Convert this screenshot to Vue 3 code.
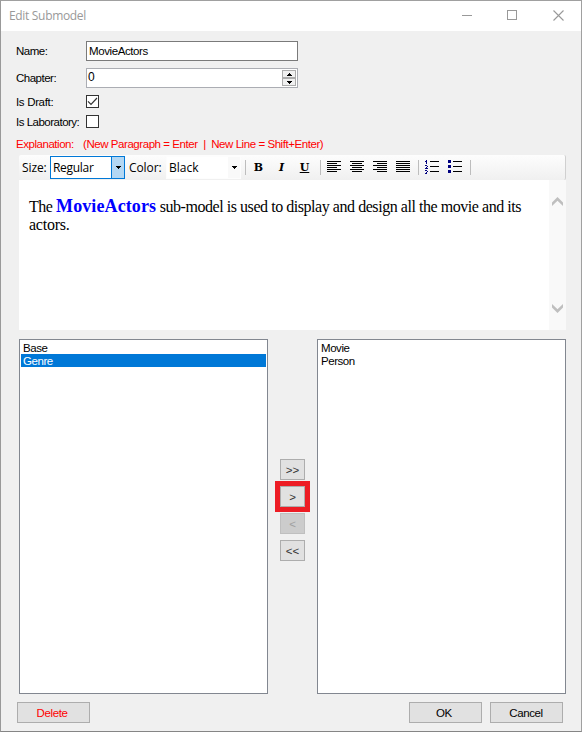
<script setup>
import { ref } from 'vue'
const name = ref('MovieActors')
const chapter = ref('0')
const available = ['Base', 'Genre']
const chosen = ['Movie', 'Person']
const selected = ref('Genre')
const aligns = [
  [[0, 14], [0, 10], [0, 14], [0, 10], [0, 14], [0, 10]],
  [[0, 14], [2, 10], [0, 14], [2, 10], [0, 14], [2, 10]],
  [[0, 14], [4, 10], [0, 14], [4, 10], [0, 14], [4, 10]],
  [[0, 14], [0, 14], [0, 14], [0, 14], [0, 14], [0, 14]],
]
</script>

<template>
  <div class="window">
    <header class="titlebar">
      <span class="title">Edit Submodel</span>
      <svg class="caption" width="110" height="14" viewBox="0 0 110 14" shape-rendering="crispEdges">
        <path d="M1 7.500h10M46.500 2.500h9v9h-9z" fill="none" stroke="#999" />
        <path d="M92.500 2.500l10 10M102.500 2.500l-10 10" fill="none" stroke="#999" stroke-width="1.1" shape-rendering="auto" />
      </svg>
    </header>

    <main class="body">
      <div class="field name-row">
        <label class="t-name">Name:</label>
        <div class="input"><span class="t-value">{{ name }}</span></div>
      </div>
      <div class="field chapter-row">
        <label class="t-chapter">Chapter:</label>
        <div class="input spinner">
          <span class="num">{{ chapter }}</span>
          <div class="spin">
            <i><svg width="5" height="3" shape-rendering="crispEdges"><path d="M2 0h1v1h1v1h1v1h-5v-1h1v-1h1z" /></svg></i>
            <i><svg width="5" height="3" shape-rendering="crispEdges"><path d="M0 0h5v1h-1v1h-1v1h-1v-1h-1v-1h-1z" /></svg></i>
          </div>
        </div>
      </div>
      <div class="field draft-row">
        <label class="t-draft">Is Draft:</label>
        <span class="check"><svg width="11" height="11"><path d="M1 5.300l3 3l6-6.300" fill="none" stroke="#333" stroke-width="1.2" /></svg></span>
      </div>
      <div class="field lab-row">
        <label class="t-lab">Is Laboratory:</label>
        <span class="check"></span>
      </div>
      <div class="explain"><span class="t-exp">Explanation:</span><span class="t-hint">(New Paragraph = Enter&nbsp; |&nbsp; New Line = Shift+Enter)</span></div>

      <div class="toolbar">
        <span class="tb-label">Size:</span>
        <div class="combo active"><span>Regular</span><i><svg width="5" height="3" shape-rendering="crispEdges"><path d="M0 0h5v1h-1v1h-1v1h-1v-1h-1v-1h-1z" /></svg></i></div>
        <span class="tb-label color-label">Color:</span>
        <div class="combo"><span>Black</span><i><svg width="5" height="3" shape-rendering="crispEdges"><path d="M0 0h5v1h-1v1h-1v1h-1v-1h-1v-1h-1z" /></svg></i></div>
        <span class="sep s1"></span>
        <span class="fmt b">B</span><span class="fmt it">I</span><span class="fmt u">U</span>
        <span class="sep s2"></span>
        <svg v-for="(a, i) in aligns" :key="i" class="align" width="14" height="13" shape-rendering="crispEdges">
          <rect v-for="(l, j) in a" :key="j" :x="l[0]" :y="j * 2" :width="l[1]" height="1" />
        </svg>
        <span class="sep s3"></span>
        <svg class="list-icon" width="14" height="15" shape-rendering="crispEdges">
          <path d="M5 1h9v1h-9zM5 6h9v1h-9zM5 11h9v1h-9z" />
          <path fill="#000080" d="M1 0h1v4h-1zM0 1h1v1h-1zM0 5h2v1h-2zM2 6h1v1h-1zM1 7h1v1h-1zM0 8h3v1h-3zM0 10h2v1h-2zM2 11h1v1h-1zM1 12h1v1h-1zM0 13h2v1h-2z" />
        </svg>
        <svg class="list-icon bullets" width="14" height="15" shape-rendering="crispEdges">
          <path d="M5 1h9v1h-9zM5 6h9v1h-9zM5 11h9v1h-9z" />
          <path fill="#000080" d="M0 0h3v3h-3zM0 5h3v3h-3zM0 10h3v3h-3z" />
        </svg>
        <span class="sep s4"></span>
      </div>

      <div class="editor">
        <div class="content"><p><span>The </span><b>MovieActors</b><span> sub-model is used to display and design all the movie and its</span></p><p class="second">actors.</p></div>
        <div class="scroll">
          <svg width="11" height="10"><path d="M0 9v-3.500l5.500-5.500l5.500 5.500v3.500l-5.500-5.200z" fill="#bfbfbf" /></svg>
          <svg width="11" height="10"><path d="M0 0v3.500l5.500 5.500l5.500-5.500v-3.500l-5.500 5.200z" fill="#bfbfbf" /></svg>
        </div>
      </div>

      <div class="lists">
        <ul class="listbox"><li v-for="x in available" :key="x" :class="{ selected: x === selected }">{{ x }}</li></ul>
        <div class="movers">
          <button>&gt;&gt;</button>
          <button class="marked">&gt;</button>
          <button disabled>&lt;</button>
          <button>&lt;&lt;</button>
        </div>
        <ul class="listbox"><li v-for="x in chosen" :key="x">{{ x }}</li></ul>
      </div>

      <footer class="footer">
        <button class="delete">Delete</button>
        <button class="ok">OK</button>
        <button class="cancel">Cancel</button>
      </footer>
    </main>
  </div>
</template>

<style>
body { margin: 0; background: #f0f0f0; }
</style>

<style scoped>
* { box-sizing: border-box; }
.window { width: 582px; height: 732px; border: 1px solid #999; border-color: #a0a0a0 #a0a0a0 #858585 #999; background: #f0f0f0; font: 11.5px/13px "Liberation Sans", Arial, sans-serif; letter-spacing: -0.4px; color: #000; white-space: nowrap; overflow: hidden; }
.titlebar { height: 30px; background: #fff; display: flex; align-items: center; justify-content: space-between; padding: 0 10px 0 8px; }
.title { font: 12px/16px "Open Sans", sans-serif; color: #999; letter-spacing: -0.32px; }
.caption { margin: 0 0 2px; }
.body { padding: 10px 15px 0 15px; display: flex; flex-direction: column; }
.field { display: flex; align-items: center; }
.field label { width: 70px; }
.t-name { letter-spacing: -0.5px; }
.t-chapter { letter-spacing: -0.5px; }
.field .t-draft { letter-spacing: -0.33px; padding-top: 1px; }
.field .t-lab { letter-spacing: -0.5px; padding-top: 1px; }
.name-row { height: 20px; }
.chapter-row { height: 20px; margin-top: 7px; }
.draft-row { height: 13px; margin-top: 7px; }
.lab-row { height: 13px; margin-top: 7px; }
.input { width: 212px; height: 20px; border: 1px solid #7a7a7a; background: #fff; padding: 3px 2px; }
.spinner { border-color: #abadb3; display: flex; justify-content: space-between; padding: 0 1px; }
.num { font-size: 12px; line-height: 17px; }
.spin { width: 14px; height: 18px; display: flex; flex-direction: column; padding: 1px 0; }
.spin i { height: 8px; border: 1px solid #acacac; background: #f0f0f0; display: flex; align-items: center; justify-content: center; }
.check { width: 13px; height: 13px; border: 1px solid #333; background: #fff; display: flex; }
.explain { color: #f00; margin-top: 10px; height: 13px; display: flex; }
.t-exp { width: 67px; letter-spacing: -0.46px; }
.t-hint { letter-spacing: -0.44px; }
.toolbar { margin: 4px 0 0 3px; width: 547px; height: 25px; background: linear-gradient(#fdfdfd, #f0f0f0); border-radius: 2px; border-right: 1px solid #d0d0d0; display: flex; align-items: center; font: 12px/16px "Open Sans", sans-serif; letter-spacing: 0; }
.tb-label { width: 31px; padding-left: 3px; letter-spacing: -0.1px; }
.combo { width: 75px; height: 23px; border: 1px solid #fdfdfd; background: #fff; display: flex; justify-content: space-between; align-items: center; padding-left: 2px; }
.combo i { width: 12px; height: 21px; display: flex; align-items: center; justify-content: center; background: #f9f9f9; }
.active { border-color: #0078d7; letter-spacing: -0.3px; }
.active i { background: #b3d7f3; border-left: 1px solid #0078d7; width: 13px; }
.color-label { width: 41px; padding-left: 4px; }
.sep { width: 1px; height: 15px; background: #bdbdbd; }
.s1 { margin-left: 4px; }
.fmt { font: bold 11px/15px "DejaVu Serif", serif; width: 23px; text-align: center; }
.b { margin-left: 1px; }
.it { font-style: italic; }
.u { text-decoration: underline; }
.s2 { margin-left: 4px; }
.align { margin-left: 9px; }
.s2 + .align { margin-left: 6px; }
.s3 { margin-left: 8px; }
.list-icon { margin-left: 6px; }
.bullets { margin-left: 9px; }
.s4 { margin-left: 8px; }
.editor { margin-left: 3px; width: 547px; height: 150px; background: #fff; display: flex; justify-content: space-between; }
.content { padding: 16px 0 0 10px; font: 16px/20px "Liberation Serif", "Times New Roman", serif; letter-spacing: -0.45px; }
.content p { margin: 0; height: 19px; }
.content b { font-size: 18px; color: #00f; letter-spacing: 0.1px; }
.content .second { letter-spacing: -0.25px; }
.scroll { width: 17px; flex-shrink: 0; background: #f9f9f9; display: flex; flex-direction: column; justify-content: space-between; align-items: center; padding: 17px 0 16px; }
.lists { margin: 9px 0 0 3px; width: 547px; height: 355px; display: flex; justify-content: space-between; }
.listbox { list-style: none; margin: 0; padding: 1px; width: 249px; border: 1px solid #828790; background: #fff; }
.listbox li { height: 13px; padding: 1px 0 0 2px; letter-spacing: -0.45px; }
.selected { background: #0078d7; color: #fff; }
.movers { width: 25px; padding-top: 120px; display: flex; flex-direction: column; gap: 6px; }
button { font: inherit; letter-spacing: -0.4px; height: 21px; padding: 1px 0 0; background: #e1e1e1; border: 1px solid #adadad; color: #000; border-radius: 0; flex-shrink: 0; }
.movers button { color: #333; letter-spacing: 0; }
.movers button:disabled { background: #ccc; border-color: #bfbfbf; color: #a0a0a0; }
.marked { box-shadow: 0 0 0 5px #ed1c24; position: relative; }
.footer { margin: 8px 3px 0 1px; display: flex; }
.footer button { width: 73px; padding-right: 3px; }
.footer .cancel { padding-right: 1px; }
.footer .delete { color: #f00; }
.ok { margin-left: 319px; }
.cancel { margin-left: 8px; }
</style>
